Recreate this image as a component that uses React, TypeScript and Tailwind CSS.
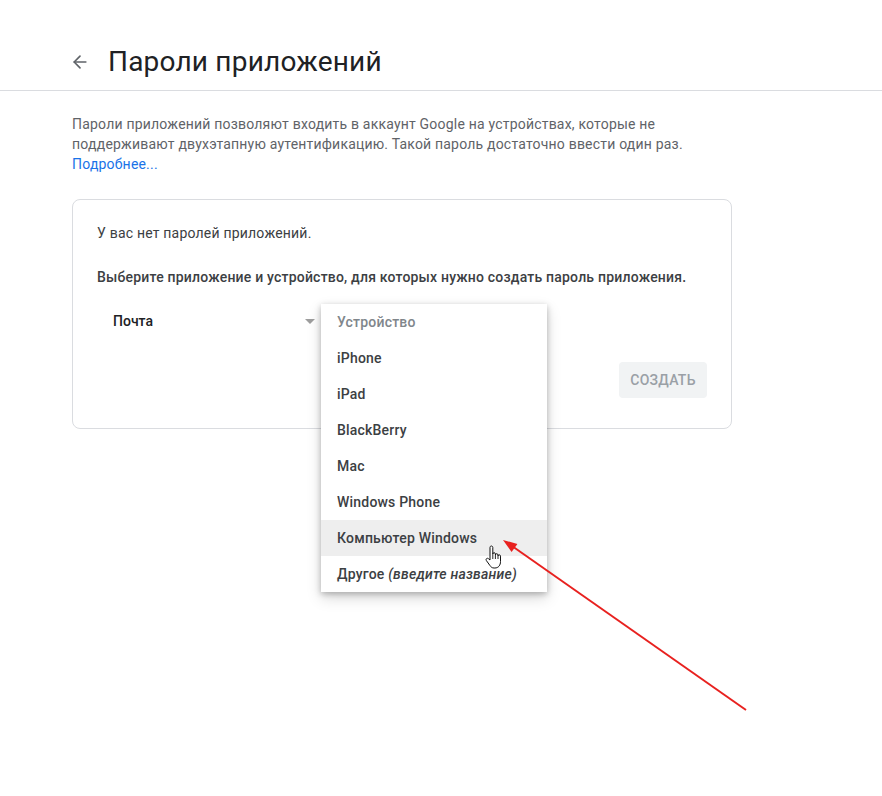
import { ArrowLeft } from 'lucide-react'

const devices = ['iPhone', 'iPad', 'BlackBerry', 'Mac', 'Windows Phone']

function HandCursor() {
  return (
    <svg width="18" height="24" viewBox="0 0 18 24" className="absolute left-[164px] top-[25px] z-20">
      <path
        d="M5 2.5c0-.9.6-1.5 1.4-1.5s1.4.6 1.4 1.5V9c0-.8.6-1.3 1.3-1.3s1.3.5 1.3 1.3v1c0-.8.6-1.3 1.3-1.3s1.3.5 1.3 1.3v1c0-.8.6-1.2 1.2-1.2s1.3.5 1.3 1.3v5.5c0 3.5-2 6.4-5.6 6.4H9c-2 0-3-1-4-2.4l-3.6-5c-.6-.8-.4-1.7.3-2.1.7-.4 1.5-.2 2 .4L5 15V2.5z"
        fill="#fff"
        stroke="#111"
        strokeWidth="1"
        strokeLinejoin="round"
      />
      <path d="M7.8 9v5M10.4 10v4M13 11v3" stroke="#111" strokeWidth="0.9" />
    </svg>
  )
}

export default function App() {
  return (
    <div className="relative min-h-[796px] w-full bg-white font-['Roboto',sans-serif] text-[#202124]">
      {/* Header */}
      <div className="flex items-center border-b border-[#dadce0] px-[70px] pb-[10px] pt-[44px]">
        <ArrowLeft className="h-[20px] w-[20px] text-[#5f6368]" strokeWidth={2} />
        <h1 className="ml-[18px] text-[28px] leading-[36px] tracking-[0.2px] text-[#202124]">Пароли приложений</h1>
      </div>

      <div className="px-[72px]">
        <p className="mt-[23px] w-[640px] text-[14px] leading-[20px] tracking-[0.2px] text-[#5f6368]">
          Пароли приложений позволяют входить в аккаунт Google на устройствах, которые не
          поддерживают двухэтапную аутентификацию. Такой пароль достаточно ввести один раз.
          <br />
          <span className="text-[#1a73e8]">Подробнее...</span>
        </p>

        {/* Card */}
        <div className="mt-[25px] w-[660px] rounded-[8px] border border-[#dadce0] px-[24px] pb-[30px] pt-[23px]">
          <div className="text-[14px] leading-[20px] tracking-[0.2px] text-[#3c4043]">У вас нет паролей приложений.</div>
          <div className="mt-[24px] text-[14px] font-medium leading-[20px] tracking-[0.2px] text-[#3c4043]">
            Выберите приложение и устройство, для которых нужно создать пароль приложения.
          </div>

          <div className="relative mt-[16px] flex h-[36px]">
            <div className="flex w-[224px] items-center justify-between pl-[16px] pr-[6px]">
              <span className="text-[14px] font-medium text-[#202124]">Почта</span>
              <span className="h-0 w-0 border-x-[5px] border-t-[5px] border-x-transparent border-t-[#9e9e9e]" />
            </div>

            {/* Dropdown menu */}
            <div className="absolute left-[224px] top-[1px] z-10 w-[226px] bg-white shadow-[0_2px_6px_rgba(0,0,0,0.25),0_6px_14px_rgba(0,0,0,0.15)]">
              <div className="flex h-[36px] items-center px-[16px] text-[14px] font-medium tracking-[0.2px] text-[#80868b]">
                Устройство
              </div>
              {devices.map((d) => (
                <div
                  key={d}
                  className="flex h-[36px] items-center px-[16px] text-[14px] font-medium tracking-[0.2px] text-[#3c4043]"
                >
                  {d}
                </div>
              ))}
              <div className="relative flex h-[36px] items-center bg-[#eeeeee] px-[16px] text-[14px] font-medium tracking-[0.2px] text-[#3c4043]">
                Компьютер Windows
                <HandCursor />
              </div>
              <div className="flex h-[36px] items-center px-[16px] text-[14px] font-medium tracking-[0.2px] text-[#3c4043]">
                Другое&nbsp;<i>(введите название)</i>
              </div>
            </div>
          </div>

          <div className="mt-[23px] flex justify-end">
            <button className="h-[36px] w-[88px] rounded-[4px] bg-[#f1f3f4] text-[14px] font-medium tracking-[0.25px] text-[#9aa0a6]">
              СОЗДАТЬ
            </button>
          </div>
        </div>
      </div>

      {/* Red annotation arrow */}
      <svg className="pointer-events-none absolute left-0 top-0 z-30" width="882" height="796">
        <line x1="746" y1="710" x2="512" y2="546" stroke="#e8211f" strokeWidth="2" />
        <polygon points="503,540 517.4,543.9 511.6,552.1" fill="#e8211f" />
      </svg>
    </div>
  )
}
